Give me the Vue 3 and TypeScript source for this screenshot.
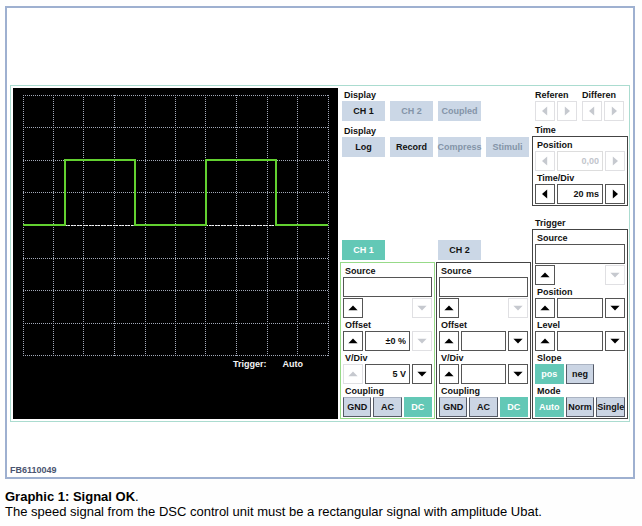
<script setup lang="ts">
import { reactive } from 'vue'

type Direction = 'up' | 'down' | 'left' | 'right'

interface Field {
  id: string
  label: string
  kind: 'source' | 'step' | 'choice'
  value: string
  axis?: 'horizontal'
  off?: 'first' | 'last' | 'all'
  options?: string[]
}

interface Panel {
  id: string
  title: string
  tab?: boolean
  active?: boolean
  fields: Field[]
}

interface Section {
  id: 'channels' | 'timing'
  panels: Panel[]
}

const triangles: Record<Direction, string> = {
  up: 'M5 2.5 L9.6 7.3 H0.4 Z',
  down: 'M5 7.5 L0.4 2.7 H9.6 Z',
  left: 'M2 5 L7.2 0.6 V9.4 Z',
  right: 'M8 5 L2.8 0.6 V9.4 Z',
}

const sections = reactive<Section[]>([
  {
    id: 'channels',
    panels: [
      {
        id: 'ch1',
        title: 'CH 1',
        tab: true,
        active: true,
        fields: [
          { id: 'ch1-source', label: 'Source', kind: 'source', value: '' },
          { id: 'ch1-offset', label: 'Offset', kind: 'step', value: '±0 %', off: 'last' },
          { id: 'ch1-vdiv', label: 'V/Div', kind: 'step', value: '5 V', off: 'first' },
          { id: 'ch1-coupling', label: 'Coupling', kind: 'choice', value: 'DC', options: ['GND', 'AC', 'DC'] },
        ],
      },
      {
        id: 'ch2',
        title: 'CH 2',
        tab: true,
        fields: [
          { id: 'ch2-source', label: 'Source', kind: 'source', value: '' },
          { id: 'ch2-offset', label: 'Offset', kind: 'step', value: '' },
          { id: 'ch2-vdiv', label: 'V/Div', kind: 'step', value: '' },
          { id: 'ch2-coupling', label: 'Coupling', kind: 'choice', value: 'DC', options: ['GND', 'AC', 'DC'] },
        ],
      },
    ],
  },
  {
    id: 'timing',
    panels: [
      {
        id: 'time',
        title: 'Time',
        fields: [
          { id: 'time-position', label: 'Position', kind: 'step', value: '0,00', axis: 'horizontal', off: 'all' },
          { id: 'time-div', label: 'Time/Div', kind: 'step', value: '20 ms', axis: 'horizontal' },
        ],
      },
      {
        id: 'trigger',
        title: 'Trigger',
        fields: [
          { id: 'trigger-source', label: 'Source', kind: 'source', value: '' },
          { id: 'trigger-position', label: 'Position', kind: 'step', value: '' },
          { id: 'trigger-level', label: 'Level', kind: 'step', value: '' },
          { id: 'trigger-slope', label: 'Slope', kind: 'choice', value: 'pos', options: ['pos', 'neg'] },
          { id: 'trigger-mode', label: 'Mode', kind: 'choice', value: 'Auto', options: ['Auto', 'Norm', 'Single'] },
        ],
      },
    ],
  },
])

const displayRows = [
  [
    { text: 'CH 1', disabled: false },
    { text: 'CH 2', disabled: true },
    { text: 'Coupled', disabled: true },
  ],
  [
    { text: 'Log', disabled: false },
    { text: 'Record', disabled: false },
    { text: 'Compress', disabled: true },
    { text: 'Stimuli', disabled: true },
  ],
]

const cursors = ['Referen', 'Differen']

const columns = [0, 30, 60, 91, 122, 152, 182, 213, 244, 274, 305]
const rows = [0, 32, 65, 97, 130, 163, 195, 228, 260]

function arrow(field: Field, end: 'first' | 'last'): Direction {
  if (field.axis === 'horizontal') return end === 'first' ? 'left' : 'right'
  return end === 'first' ? 'up' : 'down'
}

function isOff(field: Field, end: 'first' | 'last'): boolean {
  return field.off === 'all' || field.off === end
}
</script>

<template>
  <main class="page">
    <figure class="graphic">
      <div class="frame">
        <div class="instrument">
          <div class="scope">
            <svg class="plot" viewBox="0 0 306 261" role="img" aria-label="Rectangular signal">
              <g class="grid">
                <line v-for="x in columns" :key="'c' + x" :x1="x + 0.5" y1="0" :x2="x + 0.5" y2="261" />
                <line v-for="y in rows" :key="'r' + y" x1="0" :y1="y + 0.5" x2="306" :y2="y + 0.5" />
              </g>
              <line class="zero" x1="0" y1="130.5" x2="306" y2="130.5" />
              <path class="signal" d="M0 130 H42 V65 H112 V130 H183 V65 H253 V130 H305" />
            </svg>
            <p class="status"><span>Trigger:</span><span>Auto</span></p>
          </div>

          <div class="controls">
            <section v-for="section in sections" :key="section.id" :class="section.id">
              <div v-if="section.id === 'channels'" class="displays">
                <div v-for="(row, i) in displayRows" :key="i">
                  <h3 class="caption">Display</h3>
                  <div class="display-row">
                    <button v-for="b in row" :key="b.text" type="button" class="flat" :disabled="b.disabled">
                      {{ b.text }}
                    </button>
                  </div>
                </div>
              </div>
              <div v-else class="cursors">
                <div v-for="c in cursors" :key="c">
                  <h3 class="caption">{{ c }}</h3>
                  <div class="pair">
                    <button
                      v-for="d in (['left', 'right'] as const)"
                      :key="d"
                      type="button"
                      class="step"
                      disabled
                      :aria-label="c + ' ' + d"
                    >
                      <svg viewBox="0 0 10 10"><path :d="triangles[d]" /></svg>
                    </button>
                  </div>
                </div>
              </div>

              <div class="panels">
                <div v-for="panel in section.panels" :key="panel.id" class="unit">
                  <button v-if="panel.tab" type="button" class="flat tab" :class="{ on: panel.active }">
                    {{ panel.title }}
                  </button>
                  <h3 v-else class="caption title">{{ panel.title }}</h3>

                  <div class="panel" :class="{ active: panel.active }">
                    <div v-for="f in panel.fields" :key="f.id">
                      <template v-if="f.kind === 'source'">
                        <label class="caption" :for="f.id">{{ f.label }}</label>
                        <input :id="f.id" v-model="f.value" class="value" type="text" />
                        <div class="ends">
                          <button type="button" class="step" aria-label="Previous source">
                            <svg viewBox="0 0 10 10"><path :d="triangles.up" /></svg>
                          </button>
                          <button type="button" class="step" disabled aria-label="Next source">
                            <svg viewBox="0 0 10 10"><path :d="triangles.down" /></svg>
                          </button>
                        </div>
                      </template>

                      <template v-else-if="f.kind === 'step'">
                        <label class="caption" :for="f.id">{{ f.label }}</label>
                        <div class="stepper">
                          <button type="button" class="step" :disabled="isOff(f, 'first')" :aria-label="f.label + ' ' + arrow(f, 'first')">
                            <svg viewBox="0 0 10 10"><path :d="triangles[arrow(f, 'first')]" /></svg>
                          </button>
                          <input :id="f.id" v-model="f.value" class="value" type="text" :disabled="f.off === 'all'" />
                          <button type="button" class="step" :disabled="isOff(f, 'last')" :aria-label="f.label + ' ' + arrow(f, 'last')">
                            <svg viewBox="0 0 10 10"><path :d="triangles[arrow(f, 'last')]" /></svg>
                          </button>
                        </div>
                      </template>

                      <template v-else>
                        <h4 :id="f.id" class="caption">{{ f.label }}</h4>
                        <div class="choices" role="group" :aria-labelledby="f.id">
                          <button
                            v-for="o in f.options"
                            :key="o"
                            type="button"
                            class="choice"
                            :class="{ on: f.value === o }"
                            :aria-pressed="f.value === o"
                            @click="f.value = o"
                          >
                            {{ o }}
                          </button>
                        </div>
                      </template>
                    </div>
                  </div>
                </div>
              </div>
            </section>
          </div>
        </div>
        <p class="number">FB6110049</p>
      </div>
      <figcaption class="text">
        <p><strong>Graphic 1: Signal OK</strong>.</p>
        <p>The speed signal from the DSC control unit must be a rectangular signal with amplitude Ubat.</p>
      </figcaption>
    </figure>
  </main>
</template>

<style>
body {
  background: #fefefe;
}
</style>

<style scoped>
.page,
.page * {
  box-sizing: border-box;
}

.page {
  padding: 6px 7px 6px 5px;
  color: #111;
  font: bold 9px/13px 'Liberation Sans', Arial, sans-serif;
}

p,
h3,
h4,
figure {
  margin: 0;
  font-size: inherit;
}

button,
input {
  display: block;
  height: 20px;
  margin: 0;
  padding: 0;
  border: 0;
  border-radius: 0;
  color: inherit;
  font: inherit;
}

.frame {
  padding: 77px 3px 0;
  border: 2px solid #9eb0d0;
  background: #fff;
}

.instrument {
  display: flex;
  gap: 2px;
  padding: 2px 1px 2px 2px;
  border: 1px solid #abdcd0;
}

.scope {
  flex: 1;
  min-width: 0;
  padding: 7px 9px 0 10px;
  background: #000;
}

.plot {
  display: block;
  width: 100%;
  overflow: visible;
}

.grid line {
  stroke: #a3a9b8;
  stroke-width: 1;
  stroke-dasharray: 1 1;
}

.zero {
  stroke: #f4f4f4;
  stroke-width: 1;
  stroke-dasharray: 2 1;
}

.signal {
  fill: none;
  stroke: #62d030;
  stroke-width: 2;
}

.status {
  display: flex;
  justify-content: flex-end;
  gap: 16px;
  padding: 2px 26px 0 0;
  color: #f4f4f4;
}

.controls {
  display: flex;
  gap: 1px;
}

.channels {
  display: flex;
  flex-direction: column;
  justify-content: space-between;
  width: 191px;
}

.timing {
  width: 96px;
}

.caption {
  display: block;
  height: 13px;
  padding-left: 2px;
  line-height: 15px;
  white-space: nowrap;
}

.displays {
  display: grid;
  gap: 3px;
  padding: 0 2px;
}

.display-row {
  display: grid;
  grid-template-columns: repeat(4, 1fr);
  gap: 5px;
}

.flat {
  background: #cbd7e6;
  white-space: nowrap;
}

.display-row .flat {
  display: flex;
  align-items: center;
  justify-content: center;
  min-width: 0;
}

.flat:disabled {
  color: #8494a8;
}

.tab {
  width: 43px;
  margin: 0 0 2px 2px;
}

.flat.on,
.choice.on {
  border: 0;
  background: #63c8b6;
  color: #fff;
}

.cursors {
  display: flex;
  gap: 5px;
  padding-left: 3px;
}

.cursors .caption {
  padding-left: 0;
}

.pair {
  display: flex;
  gap: 2px;
}

.channels .panels {
  display: grid;
  grid-template-columns: 1fr 1fr;
  gap: 1px;
}

.timing .panels {
  display: grid;
  gap: 10px;
  padding-top: 2px;
}

.panel {
  padding: 1px 2px;
  border: 1px solid #444;
}

.panel.active {
  border-color: #97da88;
}

.value {
  width: 100%;
  min-width: 0;
  padding-right: 3px;
  border: 1px solid #555;
  background: #fff;
  text-align: right;
}

.value:disabled {
  border-color: #ddd;
  color: #c2c5cc;
}

.ends {
  display: flex;
  justify-content: space-between;
  padding-top: 1px;
}

.stepper {
  display: flex;
  gap: 2px;
}

.step {
  display: flex;
  flex: none;
  align-items: center;
  justify-content: center;
  width: 20px;
  border: 1px solid #555;
  background: #fff;
  color: #000;
}

.step:disabled {
  border-color: #e0e0e3;
  color: #c6c9cf;
}

.step svg {
  width: 10px;
  height: 10px;
  fill: currentColor;
}

.choices {
  display: grid;
  grid-template-columns: repeat(3, 1fr);
  gap: 2px;
}

.choice {
  display: flex;
  align-items: center;
  justify-content: center;
  min-width: 0;
  border: 1px solid #555a66;
  border-top-color: #aab3c2;
  background: #cbd5e4;
}

.title {
  padding-left: 3px;
}

.number {
  padding: 42px 0 0;
  color: #4a5470;
}

.text {
  padding-top: 10px;
  color: #000;
  font-size: 13px;
  font-weight: normal;
  line-height: 15px;
}
</style>
